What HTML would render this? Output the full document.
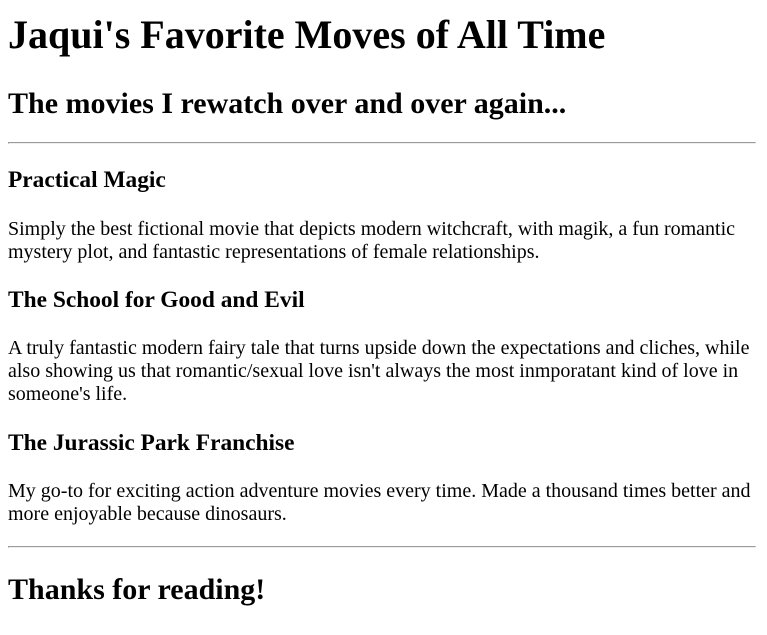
<!DOCTYPE html>
<html>
<head>
<meta charset="utf-8">
<style>
body { font-family: "Liberation Serif", "Times New Roman", serif; margin: 6.4px 8.8px 6.4px 6.4px; zoom: 1.25; color: #000; background: #fff; }
h1 { margin-top: 8.6px; margin-bottom: 23px; }
h2.sub { margin-bottom: 17px; }
</style>
</head>
<body>
<h1>Jaqui's Favorite Moves of All Time</h1>
<h2 class="sub">The movies I rewatch over and over again...</h2>
<hr>
<h3>Practical Magic</h3>
<p>Simply the best fictional movie that depicts modern witchcraft, with magik, a fun romantic mystery plot, and fantastic representations of female relationships.</p>
<h3>The School for Good and Evil</h3>
<p>A truly fantastic modern fairy tale that turns upside down the expectations and cliches, while also showing us that romantic/sexual love isn't always the most inmporatant kind of love in someone's life.</p>
<h3>The Jurassic Park Franchise</h3>
<p>My go-to for exciting action adventure movies every time. Made a thousand times better and more enjoyable because dinosaurs.</p>
<hr>
<h2>Thanks for reading!</h2>
</body>
</html>
